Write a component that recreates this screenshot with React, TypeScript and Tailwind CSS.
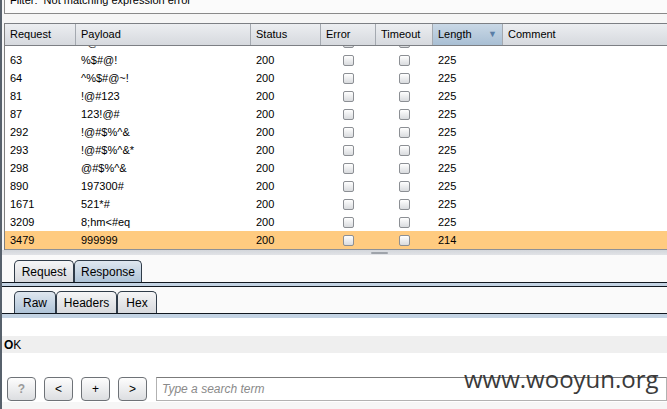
const rows = [
  { id: '60', payload: '#@~!', len: '225' },
  { id: '63', payload: '%$#@!', len: '225' },
  { id: '64', payload: '^%$#@~!', len: '225' },
  { id: '81', payload: '!@#123', len: '225' },
  { id: '87', payload: '123!@#', len: '225' },
  { id: '292', payload: '!@#$%^&', len: '225' },
  { id: '293', payload: '!@#$%^&*', len: '225' },
  { id: '298', payload: '@#$%^&', len: '225' },
  { id: '890', payload: '197300#', len: '225' },
  { id: '1671', payload: '521*#', len: '225' },
  { id: '3209', payload: '8;hm<#eq', len: '225' },
  { id: '3479', payload: '999999', len: '214', selected: true },
]

function Check() {
  return <div className="h-[11px] w-[11px] rounded-[2px] border border-[#8c8f94] bg-linear-to-b from-white to-[#d9dbde]" />
}

function HeadCell({ w, label, active }: { w: string; label: string; active?: boolean }) {
  return (
    <div
      className={`flex h-full items-center justify-between border-r border-[#a4a9b0] px-[5px] ${w} ${
        active ? 'bg-linear-to-b from-[#c9d8e6] to-[#a9bfd4]' : ''
      }`}
    >
      <span>{label}</span>
      {active && <span className="text-[9px] text-[#5a7ea6]">▼</span>}
    </div>
  )
}

function Tab({ label, active, w }: { label: string; active?: boolean; w: string }) {
  return (
    <div
      className={`flex h-[22px] items-center justify-center rounded-t-[5px] border border-b-0 border-[#2f3b48] text-[12px] ${w} ${
        active ? 'bg-linear-to-b from-[#dfe7ef] to-[#afc4d8]' : 'bg-linear-to-b from-[#f5f5f6] to-[#d7d9dd]'
      }`}
    >
      {label}
    </div>
  )
}

function Btn({ label, dim }: { label: string; dim?: boolean }) {
  return (
    <div
      className={`flex h-[24px] w-[29px] items-center justify-center rounded-[4px] border border-[#6e7277] bg-linear-to-b from-[#fdfdfd] to-[#dcdee1] text-[12px] ${
        dim ? 'font-bold text-[#9a9a9a]' : 'text-black'
      }`}
    >
      {label}
    </div>
  )
}

export default function App() {
  return (
    <div
      className="relative h-[409px] w-[667px] overflow-hidden border-l-2 border-[#57616c] bg-[#f6f6f6] text-[11px] text-black"
      style={{ fontFamily: '"Liberation Sans", Arial, sans-serif' }}
    >
      {/* filter bar */}
      <div className="ml-[2px] h-[14px] overflow-hidden border-b border-l border-[#8a8a8a] bg-[#fbfbfb]">
        <div className="-mt-[8px] pl-[5px] leading-[16px] text-[11px]">Filter:&nbsp; Not matching expression error</div>
      </div>

      {/* results table */}
      <div className="ml-[2px] mt-[9px] border-l border-[#808080] bg-white">
        <div className="flex h-[23px] border-t border-b border-[#7c7f84] bg-linear-to-b from-[#eceef1] to-[#d6d9de] text-[11px]">
          <HeadCell w="w-[71px]" label="Request" />
          <HeadCell w="w-[175px]" label="Payload" />
          <HeadCell w="w-[70px]" label="Status" />
          <HeadCell w="w-[55px]" label="Error" />
          <HeadCell w="w-[57px]" label="Timeout" />
          <HeadCell w="w-[70px]" label="Length" active />
          <div className="flex flex-1 items-center px-[5px]">Comment</div>
        </div>
        <div className="h-[204px] overflow-hidden border-b border-[#8d9096]">
          <div className="-mt-[13px]">
            {rows.map((r) => (
              <div key={r.id} className={`flex h-[18px] items-center ${r.selected ? 'bg-[#ffcb80]' : ''}`}>
                <div className="w-[71px] px-[5px]">{r.id}</div>
                <div className="w-[175px] px-[5px]">{r.payload}</div>
                <div className="w-[70px] px-[5px]">200</div>
                <div className="flex w-[55px] justify-center">
                  <Check />
                </div>
                <div className="flex w-[57px] justify-center">
                  <Check />
                </div>
                <div className="w-[70px] px-[5px]">{r.len}</div>
                <div className="flex-1" />
              </div>
            ))}
            <div className="h-[1px] bg-[#ffcb80]" />
          </div>
        </div>
      </div>

      {/* splitter */}
      <div className="flex h-[5px] justify-center bg-linear-to-b from-[#d3d6db] to-[#e1e3e7]">
        <div className="ml-[90px] mt-[2px] h-[2px] w-[17px] rounded-full bg-[#9ea3aa]" />
      </div>

      {/* request / response tabs */}
      <div className="bg-[#fafafa] pt-[5px]">
        <div className="flex pl-[12px]">
          <Tab w="w-[60px]" label="Request" />
          <Tab w="w-[68px]" label="Response" active />
        </div>
        <div className="h-[5px] border-t border-b border-[#111820] bg-[#c3d3e3]" />
        <div className="flex pl-[12px] pt-[4px]">
          <Tab w="w-[42px]" label="Raw" active />
          <Tab w="w-[61px]" label="Headers" />
          <Tab w="w-[40px]" label="Hex" />
        </div>
        <div className="h-[5px] border-t border-[#111820] bg-[#c3d3e3]" />
      </div>

      {/* message body */}
      <div className="h-[84px] bg-white pt-[18px]">
        <div className="flex h-[17px] items-center bg-[#efefef] pl-[2px] text-[12px]">
          <b>O</b>K
        </div>
        <div className="mt-[24px] flex items-center gap-[8px] pl-[5px]">
          <Btn label="?" dim />
          <Btn label="<" />
          <Btn label="+" />
          <Btn label=">" />
          <div className="ml-[1px] flex h-[24px] flex-1 items-center border border-[#b2b2b2] border-t-[#7b7b7b] bg-white pl-[5px] text-[12px] italic text-[#8a8a8a]">
            Type a search term
          </div>
        </div>
      </div>

      {/* watermark */}
      <div
        className="absolute left-[462px] top-[367px] text-[24px] leading-[24px] text-[#3a3a3a]"
        style={{ fontFamily: '"Open Sans", sans-serif' }}
      >
        www.wooyun.org
      </div>
    </div>
  )
}
